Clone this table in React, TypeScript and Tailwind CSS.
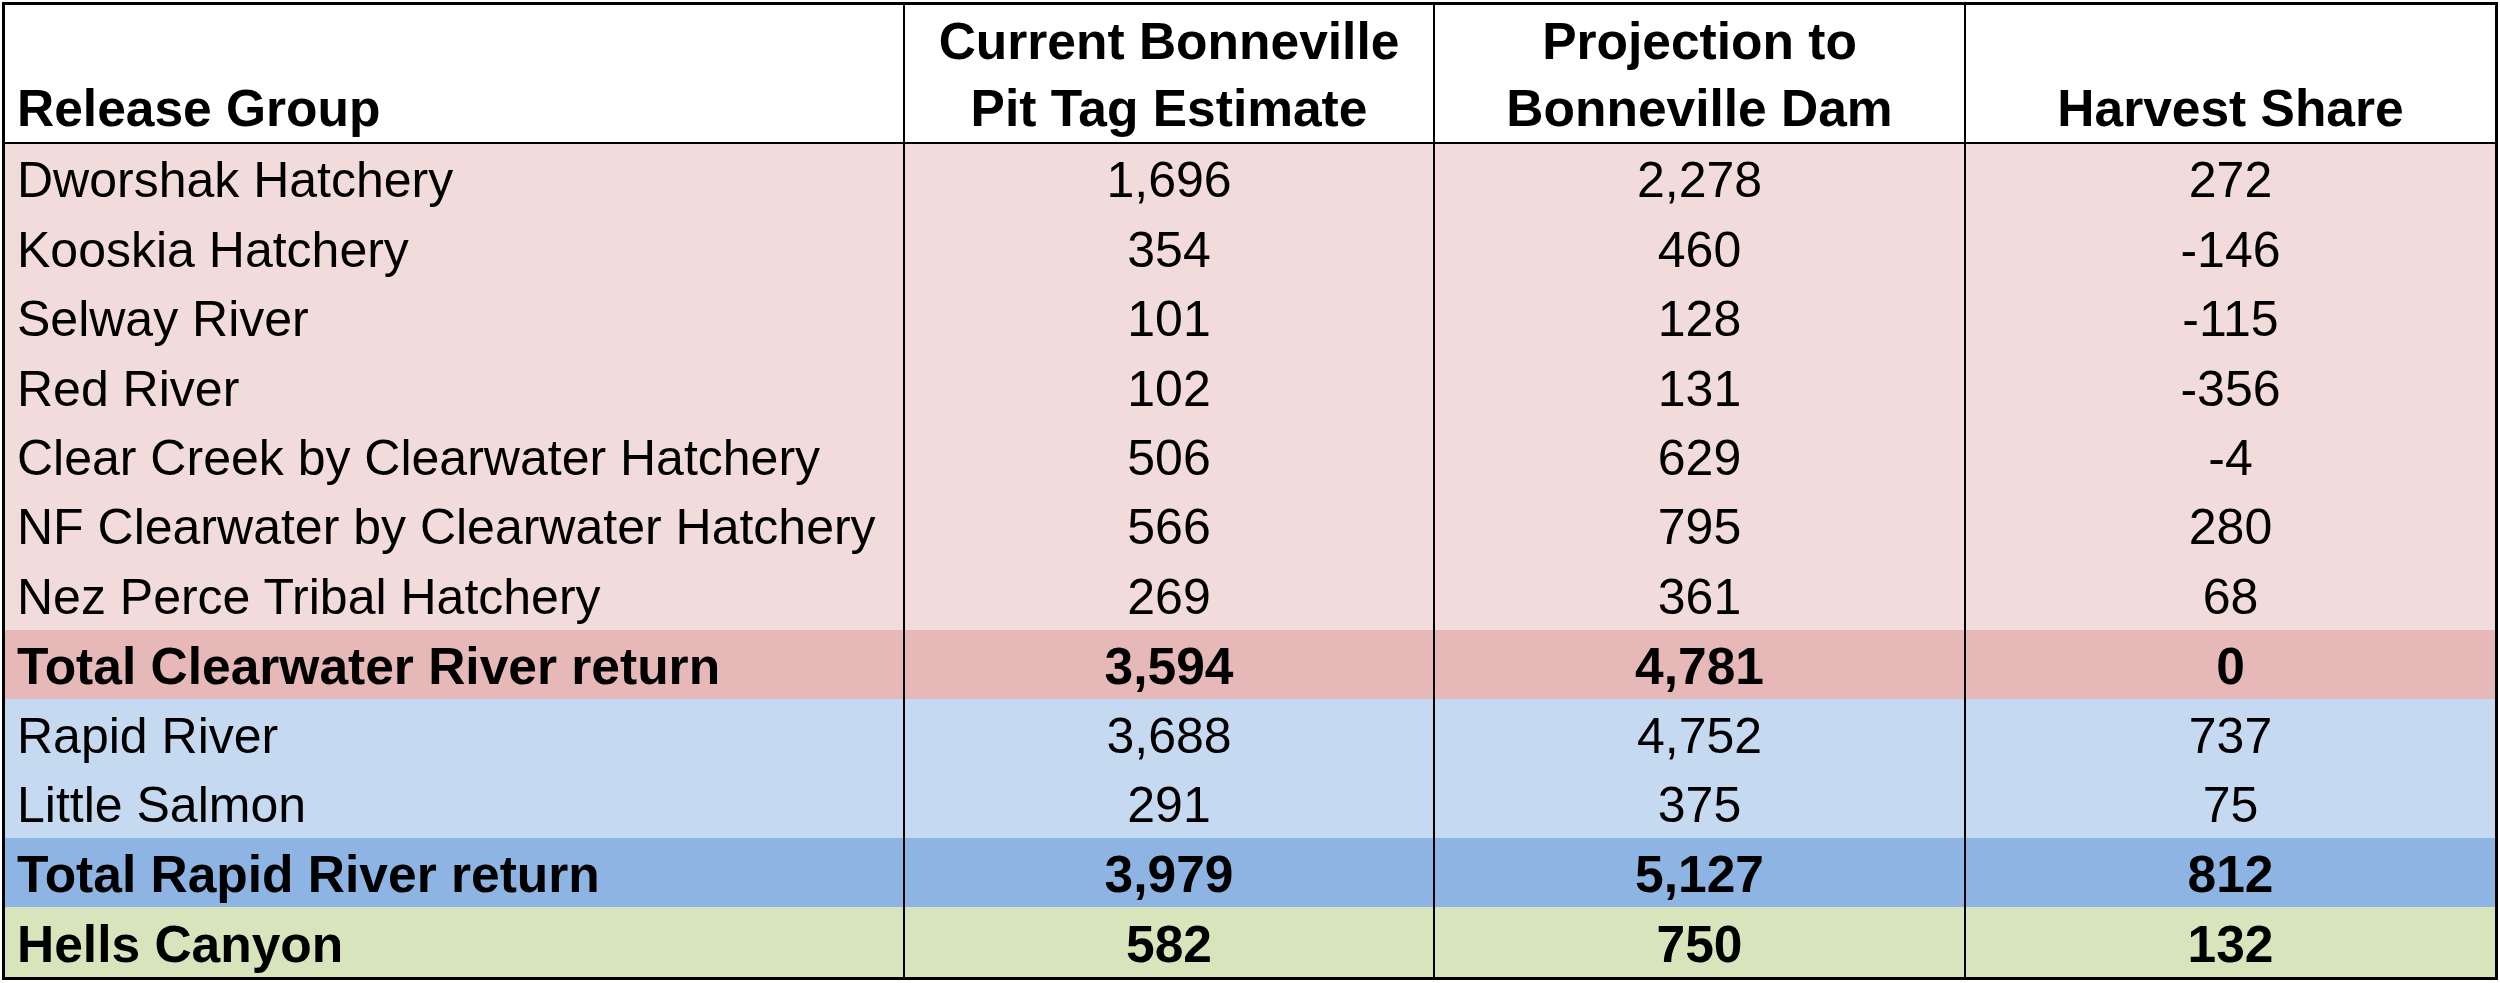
import React from 'react';

type Row = {
  name: string;
  pit: string;
  proj: string;
  share: string;
  bg: string;
  bold?: boolean;
};

const rows: Row[] = [
  { name: 'Dworshak Hatchery', pit: '1,696', proj: '2,278', share: '272', bg: 'bg-[#f2dcdb]' },
  { name: 'Kooskia Hatchery', pit: '354', proj: '460', share: '-146', bg: 'bg-[#f2dcdb]' },
  { name: 'Selway River', pit: '101', proj: '128', share: '-115', bg: 'bg-[#f2dcdb]' },
  { name: 'Red River', pit: '102', proj: '131', share: '-356', bg: 'bg-[#f2dcdb]' },
  { name: 'Clear Creek by Clearwater Hatchery', pit: '506', proj: '629', share: '-4', bg: 'bg-[#f2dcdb]' },
  { name: 'NF Clearwater by Clearwater Hatchery', pit: '566', proj: '795', share: '280', bg: 'bg-[#f2dcdb]' },
  { name: 'Nez Perce Tribal Hatchery', pit: '269', proj: '361', share: '68', bg: 'bg-[#f2dcdb]' },
  { name: 'Total Clearwater River return', pit: '3,594', proj: '4,781', share: '0', bg: 'bg-[#e6b8b7]', bold: true },
  { name: 'Rapid River', pit: '3,688', proj: '4,752', share: '737', bg: 'bg-[#c5d9f1]' },
  { name: 'Little Salmon', pit: '291', proj: '375', share: '75', bg: 'bg-[#c5d9f1]' },
  { name: 'Total Rapid River return', pit: '3,979', proj: '5,127', share: '812', bg: 'bg-[#8db4e2]', bold: true },
  { name: 'Hells Canyon', pit: '582', proj: '750', share: '132', bg: 'bg-[#d8e4bc]', bold: true },
];

const App: React.FC = () => {
  return (
    <div className="w-[2500px] h-[983px] bg-white p-[2px] font-['Liberation_Sans',Arial,sans-serif] text-black">
      <div className="border-[3px] border-black w-[2496px]">
        {/* header */}
        <div className="grid grid-cols-[898px_530px_531px_1fr] h-[139px] border-b-2 border-black bg-white font-bold text-[51.5px] leading-[67px]">
          <div className="flex items-end pl-[12px]">Release Group</div>
          <div className="flex items-end justify-center text-center border-l-2 border-black">
            Current Bonneville
            <br />
            Pit Tag Estimate
          </div>
          <div className="flex items-end justify-center text-center border-l-2 border-black">
            Projection to
            <br />
            Bonneville Dam
          </div>
          <div className="flex items-end justify-center text-center border-l-2 border-black">Harvest Share</div>
        </div>

        {/* data rows */}
        {rows.map(row => (
          <div
            key={row.name}
            className={`grid grid-cols-[898px_530px_531px_1fr] h-[69.4px] leading-[66px] ${row.bg} ${
              row.bold ? 'font-bold text-[51.5px]' : 'font-normal text-[50px]'
            }`}
          >
            <div className="flex items-end pl-[12px] whitespace-nowrap">{row.name}</div>
            <div className="flex items-end justify-center border-l-2 border-black">{row.pit}</div>
            <div className="flex items-end justify-center border-l-2 border-black">{row.proj}</div>
            <div className="flex items-end justify-center border-l-2 border-black">{row.share}</div>
          </div>
        ))}
      </div>
    </div>
  );
};

export default App;
